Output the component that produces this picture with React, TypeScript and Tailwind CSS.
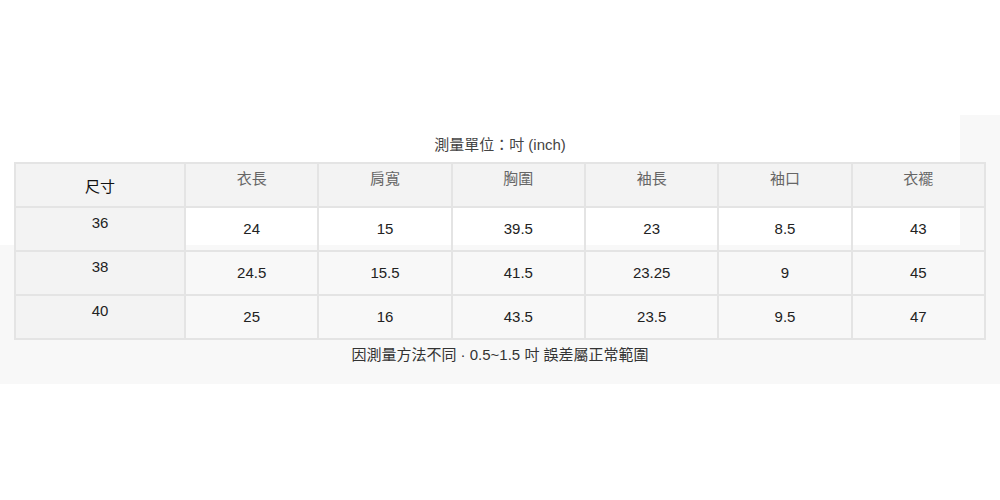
import React from "react";

const headers = ["衣長", "肩寬", "胸圍", "袖長", "袖口", "衣襬"];
const rows: [string, string[]][] = [
  ["36", ["24", "15", "39.5", "23", "8.5", "43"]],
  ["38", ["24.5", "15.5", "41.5", "23.25", "9", "45"]],
  ["40", ["25", "16", "43.5", "23.5", "9.5", "47"]],
];

const font = {
  fontFamily:
    '"Liberation Sans", Arial, "Noto Sans CJK TC", "Noto Sans CJK SC", sans-serif',
};

export default function App() {
  return (
    <div className="relative w-[1000px] h-[500px] bg-white overflow-hidden" style={font}>
      <div className="absolute left-[960px] top-[115px] w-[40px] h-[140px] bg-[#f8f8f8]" />
      <div className="absolute left-0 top-[245px] w-[1000px] h-[139px] bg-[#f8f8f8]" />
      <div className="relative pt-[135px] px-[14px] text-[15px] leading-[20px]">
        <div className="text-center text-[#444] mb-[7px]">測量單位：吋 (inch)</div>
        <div className="grid grid-cols-[170px_repeat(6,1fr)] border-l-2 border-t-2 border-[#e4e4e4]">
          <div className="h-[44px] flex items-center justify-center bg-[#f3f3f3] border-r-2 border-b-2 border-[#e4e4e4] text-[#111] pt-[3px]">
            尺寸
          </div>
          {headers.map((h) => (
            <div
              key={h}
              className="h-[44px] flex justify-center pt-[5px] bg-[#f3f3f3] border-r-2 border-b-2 border-[#e4e4e4] text-[#666]"
            >
              {h}
            </div>
          ))}
          {rows.map(([size, vals]) => (
            <React.Fragment key={size}>
              <div className="h-[44px] flex justify-center pt-[5px] bg-[#f3f3f3] border-r-2 border-b-2 border-[#e4e4e4] text-[#222]">
                {size}
              </div>
              {vals.map((v, i) => (
                <div
                  key={i}
                  className="h-[44px] flex items-center justify-center border-r-2 border-b-2 border-[#e4e4e4] text-[#222]"
                >
                  {v}
                </div>
              ))}
            </React.Fragment>
          ))}
        </div>
        <div className="text-center text-[#333] mt-[5px]">
          因測量方法不同 · 0.5~1.5 吋 誤差屬正常範圍
        </div>
      </div>
    </div>
  );
}
